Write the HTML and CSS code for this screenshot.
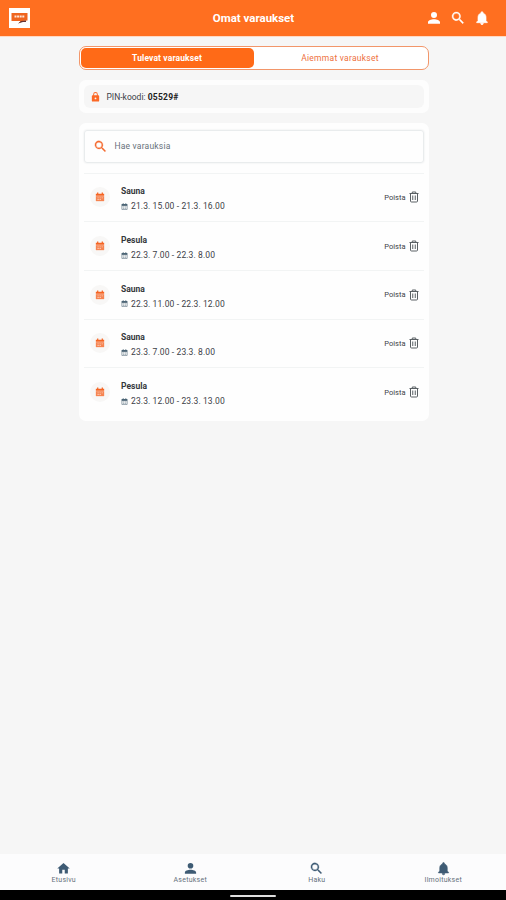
FILE: index.html
```html
<!DOCTYPE html>
<html lang="fi">
<head>
<meta charset="utf-8">
<title>Omat varaukset</title>
<link rel="stylesheet" href="styles.css">
</head>
<body>
<svg class="defs" aria-hidden="true">
  <symbol id="person" viewBox="0 0 24 24"><path d="M12 12a4.500 4.500 0 1 0 0-9 4.500 4.500 0 0 0 0 9zM3 20.500v-2c0-3 5-4.500 9-4.500s9 1.500 9 4.500v2z"/></symbol>
  <symbol id="search" viewBox="0 0 24 24"><path d="M15.500 14h-.8l-.3-.3a6.500 6.500 0 1 0-.7.7l.3.3v.8l5 5 1.500-1.500zm-6 0a4.500 4.500 0 1 1 0-9 4.500 4.500 0 0 1 0 9z" stroke="currentColor" stroke-width=".5"/></symbol>
  <symbol id="bell" viewBox="0 0 24 24"><path d="M12 22a2 2 0 0 0 2-2h-4a2 2 0 0 0 2 2zm6-6v-5c0-3.100-1.600-5.600-4.500-6.300V4a1.500 1.500 0 0 0-3 0v.7C7.600 5.400 6 7.900 6 11v5l-2 2v1h16v-1z" stroke="currentColor" stroke-width="1"/></symbol>
  <symbol id="home" viewBox="0 0 24 24"><path d="M10 20v-6h4v6h5v-8h3L12 3 2 12h3v8z"/></symbol>
  <symbol id="lock" viewBox="0 0 24 24"><path d="M18 8h-1V6A5 5 0 0 0 7 6v2H6a2 2 0 0 0-2 2v10c0 1.100.9 2 2 2h12a2 2 0 0 0 2-2V10a2 2 0 0 0-2-2zm-6 9a2 2 0 1 1 0-4 2 2 0 0 1 0 4zm3-9H9V6a3 3 0 0 1 6 0z"/></symbol>
  <symbol id="calendar" viewBox="0 0 24 24"><path d="M2 4h3V1h3v3h8V1h3v3h3v5H2z"/><path d="M2 10h20v12H2z" opacity=".78"/><path d="M6 13h3v2H6zm5 0h3v2h-3zm5 0h3v2h-3zM6 17h3v2H6zm5 0h3v2h-3z" fill="#fff" opacity=".6"/></symbol>
  <symbol id="date" viewBox="0 0 24 24"><path d="M2 3h4V1h3v2h6V1h3v2h4v6H2z"/><path d="M3 9h18v13H3z" fill="none" stroke="currentColor" stroke-width="2"/><path d="M7 12h4v3H7zm6 0h4v3h-4zM7 17h4v3H7zm6 0h4v3h-4z" opacity=".6"/></symbol>
  <symbol id="trash" viewBox="0 0 20 24"><path d="M1 5h18M6.500 5V2h7v3M3 5v15q0 2 2 2h10q2 0 2-2V5M7.500 9v9M12.500 9v9" fill="none" stroke="currentColor" stroke-width="2"/></symbol>
</svg>

<header class="topbar">
  <svg class="logo" viewBox="0 0 21 20"><path fill="#fff" d="M0 0h21v20H0z"/><path fill="#ef651f" d="M2.500 5H18.500v7.500l-5 .5-4 2.500 2-2.500h-9z"/><path fill="#633" d="M9 15.500l3-2.500 5-.5v1.500h-3z"/><path d="M5.500 8.500h10" stroke="#ffe5d7" stroke-width="1.800" stroke-dasharray="2 .6"/></svg>
  <h1>Omat varaukset</h1>
  <div class="actions">
    <svg><use href="#person"/></svg><svg><use href="#search"/></svg><svg><use href="#bell"/></svg>
  </div>
</header>

<main>
  <div class="tabs"><div class="tab active">Tulevat varaukset</div><div class="tab">Aiemmat varaukset</div></div>

  <section class="pin-card"><div class="pin"><svg><use href="#lock"/></svg><span>PIN-koodi: <b>05529#</b></span></div></section>

  <section class="bookings">
    <div class="search"><svg><use href="#search"/></svg><span>Hae varauksia</span></div>
    <ul>
      <li><div class="badge"><svg><use href="#calendar"/></svg></div><div class="info"><b>Sauna</b><div class="time"><svg><use href="#date"/></svg><span>21.3. 15.00 - 21.3. 16.00</span></div></div><div class="remove">Poista<svg><use href="#trash"/></svg></div></li>
      <li><div class="badge"><svg><use href="#calendar"/></svg></div><div class="info"><b>Pesula</b><div class="time"><svg><use href="#date"/></svg><span>22.3. 7.00 - 22.3. 8.00</span></div></div><div class="remove">Poista<svg><use href="#trash"/></svg></div></li>
      <li><div class="badge"><svg><use href="#calendar"/></svg></div><div class="info"><b>Sauna</b><div class="time"><svg><use href="#date"/></svg><span>22.3. 11.00 - 22.3. 12.00</span></div></div><div class="remove">Poista<svg><use href="#trash"/></svg></div></li>
      <li><div class="badge"><svg><use href="#calendar"/></svg></div><div class="info"><b>Sauna</b><div class="time"><svg><use href="#date"/></svg><span>23.3. 7.00 - 23.3. 8.00</span></div></div><div class="remove">Poista<svg><use href="#trash"/></svg></div></li>
      <li><div class="badge"><svg><use href="#calendar"/></svg></div><div class="info"><b>Pesula</b><div class="time"><svg><use href="#date"/></svg><span>23.3. 12.00 - 23.3. 13.00</span></div></div><div class="remove">Poista<svg><use href="#trash"/></svg></div></li>
    </ul>
  </section>
</main>

<nav>
  <div><svg><use href="#home"/></svg><span>Etusivu</span></div>
  <div><svg><use href="#person"/></svg><span>Asetukset</span></div>
  <div><svg><use href="#search"/></svg><span>Haku</span></div>
  <div><svg><use href="#bell"/></svg><span>Ilmoitukset</span></div>
</nav>
<div class="system"><i></i></div>
</body>
</html>
```
FILE: styles.css
```css
* { box-sizing: border-box; }
body {
  margin: 0;
  height: 900px;
  display: flex;
  flex-direction: column;
  overflow: hidden;
  background: #f6f6f6;
  color: #3c4046;
  font-family: Roboto, "Liberation Sans", sans-serif;
  font-size: 8.500px;
}
svg { display: block; flex: none; fill: currentColor; }
.defs { position: absolute; width: 0; height: 0; }

.topbar {
  height: 37px;
  flex: none;
  display: grid;
  grid-template-columns: 1fr auto 1fr;
  align-items: center;
  padding: 0 16px 1px 9px;
  background: #ff6f20;
  border-bottom: 1px solid #ffd9c4;
  color: #fff;
}
.logo { width: 21px; height: 20px; }
h1 { margin: 0 0 0 8px; font-size: 11.500px; line-height: 16px; font-weight: 700; }
.actions { display: flex; justify-content: flex-end; gap: 8px; }
.actions svg { width: 16px; height: 16px; }

main { flex: 1; width: 350px; margin: 9px 0 0 78.500px; }
.tabs {
  display: flex;
  height: 24px;
  padding: 1px;
  border: 1px solid #f2966a;
  border-radius: 7px;
  background: #fff;
}
.tab {
  flex: 1;
  display: flex;
  align-items: center;
  justify-content: center;
  border-radius: 5px;
  color: #ee7040;
  letter-spacing: .25px;
}
.tab.active { background: #ff6a17; color: #fff; font-weight: 700; letter-spacing: .12px; }

.pin-card { margin-top: 10px; height: 33px; padding: 5px; border-radius: 7px; background: #fdfdfd; }
.pin {
  height: 23px;
  display: flex;
  align-items: center;
  gap: 6px;
  padding: 0 6px;
  border-radius: 6px;
  background: #f6f6f6;
}
.pin svg { width: 11px; height: 12px; color: #fb6826; }
.pin b { color: #222; letter-spacing: .25px; }

.bookings { margin-top: 9.500px; height: 298.500px; padding: 7px 5px 0; border-radius: 7px; background: #fefefe; }
.search {
  height: 33px;
  display: flex;
  align-items: center;
  gap: 7px;
  padding: 0 8px;
  border: 1px solid #e9eced;
  border-radius: 3px;
  box-shadow: 0 0 2px #e3e6e7;
  color: #67717b;
  letter-spacing: .2px;
}
.search svg { width: 15px; height: 15px; color: #f46b30; }
ul { list-style: none; margin: 10px 0 0; padding: 0; }
li {
  display: flex;
  align-items: center;
  height: 48.700px;
  padding: 0 5px 0 6px;
  border-top: 1px solid #f2f4f4;
}
.badge {
  width: 20px;
  height: 20px;
  display: flex;
  align-items: center;
  justify-content: center;
  border-radius: 50%;
  background: #f8f7f6;
  color: #f56422;
}
.badge svg { width: 10px; height: 10px; }
.info { flex: 1; margin: 3px 0 0 11.500px; }
.info b { display: block; line-height: 10px; color: #34373b; }
.time { display: flex; align-items: center; gap: 3px; margin-top: 5px; line-height: 10px; letter-spacing: .11px; }
.time svg { width: 7px; height: 7px; color: #4b6475; }
.remove { display: flex; align-items: center; gap: 3px; font-size: 7.500px; letter-spacing: 0; }
.remove svg { width: 10px; height: 12px; color: #5a6064; }

nav { flex: none; height: 36px; display: flex; background: #fcfcfd; color: #66717c; }
nav div { flex: 1; display: flex; flex-direction: column; align-items: center; padding: 7px 0 0 1px; }
nav svg { width: 15px; height: 15px; color: #3e5b74; }
nav span { font-size: 7px; line-height: 9px; letter-spacing: .25px; }
.system { flex: none; height: 10px; display: flex; justify-content: center; padding-top: 5px; background: #000; }
.system i { width: 46px; height: 2px; border-radius: 1px; background: #ddd; }
```
